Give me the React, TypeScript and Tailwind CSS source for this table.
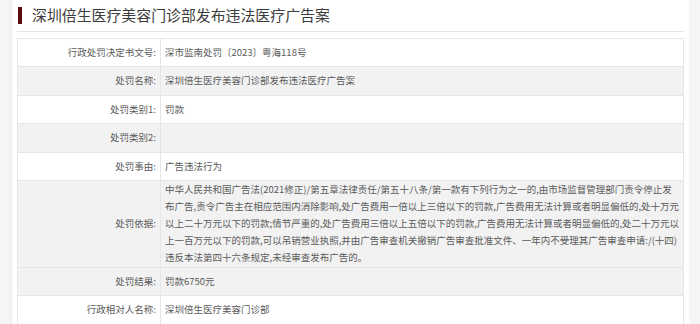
import React from "react";

function Row({
  label,
  children,
  gray,
  h = "h-[28.5px]",
  first,
}: {
  label: string;
  children?: React.ReactNode;
  gray?: boolean;
  h?: string;
  first?: boolean;
}) {
  return (
    <div
      className={`flex ${h} border-b border-[#e6e6e6] ${first ? "border-t" : ""} ${
        gray ? "bg-[#f2f2f2]" : "bg-white"
      }`}
    >
      <div className="w-[143px] shrink-0 border-r border-[#e6e6e6] flex items-center justify-end pr-[4px] text-[#5a5a5a]">
        {label}
      </div>
      <div className="flex-1 flex items-center pl-[4px] text-[#5a5a5a]">{children}</div>
    </div>
  );
}

export default function App() {
  return (
    <div
      className="w-[700px] h-[324px] overflow-hidden bg-[#f5f5f5] flex"
      style={{ fontFamily: '"Noto Sans CJK SC", "Microsoft YaHei", sans-serif' }}
    >
      <div className="ml-[11px] w-[678px] bg-white border-l border-[#ececec] pl-[5px] pr-[5px] h-full">
        <div className="h-[32px] flex items-center border-b border-[#e3e3e3]">
          <div className="w-[4px] h-[17px] bg-[#5c0d0d] ml-[1px] mr-[10px]" />
          <div className="text-[14.9px] font-normal text-[#3c3c3c] leading-none pb-[1px]">
            深圳倍生医疗美容门诊部发布违法医疗广告案
          </div>
        </div>
        <div className="mt-[6px] border-l border-r border-[#e6e6e6] text-[9.5px] leading-[17px]">
          <Row label="行政处罚决定书文号:" first h="h-[29px]">
            深市监南处罚〔2023〕粤海118号
          </Row>
          <Row label="处罚名称:" gray>
            深圳倍生医疗美容门诊部发布违法医疗广告案
          </Row>
          <Row label="处罚类别1:">罚款</Row>
          <Row label="处罚类别2:" gray />
          <Row label="处罚事由:">广告违法行为</Row>
          <Row label="处罚依据:" gray h="h-[86.5px]">
            <div className="whitespace-nowrap">
              <div>中华人民共和国广告法(2021修正)/第五章法律责任/第五十八条/第一款有下列行为之一的,由市场监督管理部门责令停止发</div>
              <div>布广告,责令广告主在相应范围内消除影响,处广告费用一倍以上三倍以下的罚款,广告费用无法计算或者明显偏低的,处十万元</div>
              <div>以上二十万元以下的罚款;情节严重的,处广告费用三倍以上五倍以下的罚款,广告费用无法计算或者明显偏低的,处二十万元以</div>
              <div>上一百万元以下的罚款,可以吊销营业执照,并由广告审查机关撤销广告审查批准文件、一年内不受理其广告审查申请:/(十四)</div>
              <div>违反本法第四十六条规定,未经审查发布广告的。</div>
            </div>
          </Row>
          <Row label="处罚结果:" gray>
            罚款6750元
          </Row>
          <Row label="行政相对人名称:">深圳倍生医疗美容门诊部</Row>
        </div>
      </div>
    </div>
  );
}
